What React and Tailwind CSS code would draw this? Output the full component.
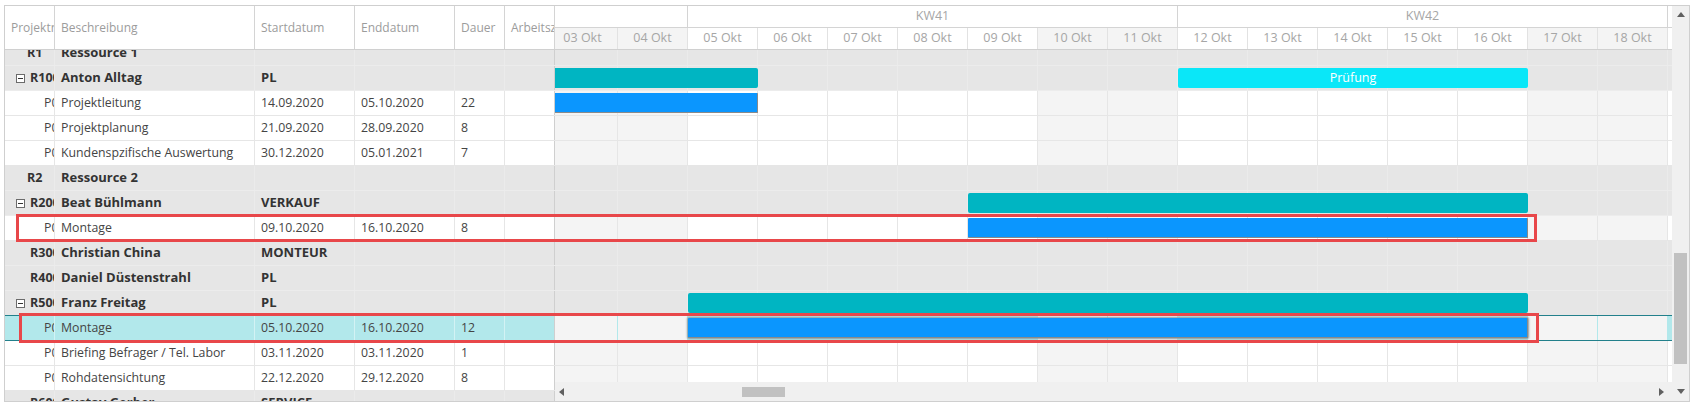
import React from "react";

const days = [
  { label: "03 Okt", we: true },
  { label: "04 Okt", we: true },
  { label: "05 Okt" },
  { label: "06 Okt" },
  { label: "07 Okt" },
  { label: "08 Okt" },
  { label: "09 Okt" },
  { label: "10 Okt", we: true },
  { label: "11 Okt", we: true },
  { label: "12 Okt" },
  { label: "13 Okt" },
  { label: "14 Okt" },
  { label: "15 Okt" },
  { label: "16 Okt" },
  { label: "17 Okt", we: true },
  { label: "18 Okt", we: true },
  { label: "19 Okt" },
];

// bar positions are px from the left edge of 03 Okt
const rows = [
  { kind: "group", code: "R1", name: "Ressource 1" },
  {
    kind: "res", code: "R1001", name: "Anton Alltag", role: "PL", expand: true,
    bars: [
      { type: "sum", left: -600, width: 810 },
      { type: "test", left: 630, width: 350, label: "Prüfung" },
    ],
  },
  { kind: "task", code: "P0001", name: "Projektleitung", start: "14.09.2020", end: "05.10.2020", dur: "22", bars: [{ type: "task", left: -600, width: 810 }] },
  { kind: "task", code: "P0002", name: "Projektplanung", start: "21.09.2020", end: "28.09.2020", dur: "8" },
  { kind: "task", code: "P0003", name: "Kundenspzifische Auswertung", start: "30.12.2020", end: "05.01.2021", dur: "7" },
  { kind: "group", code: "R2", name: "Ressource 2" },
  { kind: "res", code: "R2001", name: "Beat Bühlmann", role: "VERKAUF", expand: true, bars: [{ type: "sum", left: 420, width: 560 }] },
  { kind: "task", code: "P0004", name: "Montage", start: "09.10.2020", end: "16.10.2020", dur: "8", bars: [{ type: "task", left: 420, width: 560 }] },
  { kind: "res", code: "R3001", name: "Christian China", role: "MONTEUR" },
  { kind: "res", code: "R4001", name: "Daniel Düstenstrahl", role: "PL" },
  { kind: "res", code: "R5001", name: "Franz Freitag", role: "PL", expand: true, bars: [{ type: "sum", left: 140, width: 840 }] },
  { kind: "task", code: "P0005", name: "Montage", start: "05.10.2020", end: "16.10.2020", dur: "12", selected: true, bars: [{ type: "task", left: 140, width: 840, active: true }] },
  { kind: "task", code: "P0006", name: "Briefing Befrager / Tel. Labor", start: "03.11.2020", end: "03.11.2020", dur: "1" },
  { kind: "task", code: "P0007", name: "Rohdatensichtung", start: "22.12.2020", end: "29.12.2020", dur: "8" },
  { kind: "res", code: "R6001", name: "Gustav Gerber", role: "SERVICE" },
];

const cols = [
  { key: "code", title: "Projektnr", w: "w-[50px]" },
  { key: "name", title: "Beschreibung", w: "w-[200px]" },
  { key: "start", title: "Startdatum", w: "w-[100px]" },
  { key: "end", title: "Enddatum", w: "w-[100px]" },
  { key: "dur", title: "Dauer", w: "w-[50px]" },
  { key: "work", title: "Arbeitszeit", w: "w-[50px]" },
];

function rowLine(i) {
  if (rows[i + 1] && rows[i + 1].selected) return "border-[#22808b]";
  if (rows[i].selected) return "border-[#22808b]";
  return rows[i].kind === "task" ? "border-[#e6e6e6]" : "border-[#ececec]";
}

function Minus() {
  return (
    <span className="w-[9px] h-[9px] border border-[#6b6b6b] bg-white flex items-center justify-center shrink-0">
      <span className="w-[5px] h-[1px] bg-[#333]" />
    </span>
  );
}

function CodeCell({ row }) {
  if (row.kind === "group")
    return <span className="pl-[22px] font-bold text-[12.5px] text-[#333]">{row.code}</span>;
  if (row.kind === "res")
    return (
      <span className="flex items-center pl-[11px] gap-[5px] font-bold text-[12.5px] text-[#333]">
        {row.expand ? <Minus /> : <span className="w-[9px] shrink-0" />}
        {row.code}
      </span>
    );
  return <span className="pl-[39px] text-[#444]">{row.code}</span>;
}

function GridRow({ row, i }) {
  const grey = row.kind !== "task";
  const bg = row.selected ? "bg-[#b2e8eb]" : grey ? "bg-[#e6e6e6]" : "bg-white";
  const divider = row.selected ? "border-[#d3f2f4]" : grey ? "border-[#ebebeb]" : "border-[#e6e6e6]";
  const weight = grey ? "font-bold text-[13px] text-[#333]" : "text-[#444]";
  return (
    <div className={`flex h-[25px] shrink-0 border-b ${rowLine(i)} ${bg} ${row.selected ? "border-l border-l-[#22808b] ml-[-1px]" : ""}`}>
      {cols.map((c) => (
        <div
          key={c.key}
          className={`${c.w} shrink-0 h-full border-r ${c.key === "work" ? "border-[#cfcfcf]" : divider} flex items-center overflow-hidden whitespace-nowrap ${c.key === "code" ? "" : "px-[6px]"}`}
        >
          {c.key === "code" && <CodeCell row={row} />}
          {c.key === "name" && <span className={weight}>{row.name}</span>}
          {c.key === "start" && <span className={weight}>{row.kind === "res" ? row.role : row.start}</span>}
          {c.key === "end" && <span className={weight}>{row.end}</span>}
          {c.key === "dur" && <span className={weight}>{row.dur}</span>}
        </div>
      ))}
    </div>
  );
}

function Bar({ bar }) {
  const pos = { left: bar.left, width: bar.width };
  if (bar.type === "sum")
    return <div className="absolute top-[2px] h-[20px] bg-[#00b5c2] rounded-[2px]" style={pos} />;
  if (bar.type === "test")
    return (
      <div
        className="absolute top-[2px] h-[20px] bg-[#0ae7f8] rounded-[2px] flex items-center justify-center text-white text-[12.5px]"
        style={pos}
      >
        {bar.label}
      </div>
    );
  return (
    <div
      className={`absolute top-[2px] h-[20px] bg-[#0b96fe] rounded-[1px] border-b border-r border-[#8a8a8a] ${bar.active ? "shadow-[0_0_2px_1px_#8f9a9c]" : ""}`}
      style={pos}
    />
  );
}

function GanttRow({ row, i }) {
  const grey = row.kind !== "task";
  return (
    <div className={`relative flex h-[25px] shrink-0 border-b ${rowLine(i)}`}>
      {days.map((d) => {
        let cell = "bg-white border-[#e6e6e6]";
        if (grey) cell = "bg-[#e6e6e6] border-[#ebebeb]";
        else if (row.selected) cell = d.we ? "bg-[#f4f4f4] border-[#b2e8eb]" : "bg-[#b2e8eb] border-[#b2e8eb]";
        else if (d.we) cell = "bg-[#f4f4f4] border-[#e6e6e6]";
        return <div key={d.label} className={`w-[70px] shrink-0 h-full border-r ${cell}`} />;
      })}
      {(row.bars || []).map((b, k) => (
        <Bar key={k} bar={b} />
      ))}
    </div>
  );
}

function Arrow({ dir }) {
  const pts = {
    up: "0,5 4,0 8,5",
    down: "0,0 8,0 4,5",
    left: "5,0 5,8 0,4",
    right: "0,0 0,8 5,4",
  }[dir];
  const vertical = dir === "up" || dir === "down";
  return (
    <svg width={vertical ? 8 : 5} height={vertical ? 5 : 8} className="block">
      <polygon points={pts} fill="#606060" />
    </svg>
  );
}

export default function App() {
  return (
    <div className="w-[1698px] h-[407px] bg-white pt-[5px] pl-[4px] font-['Open_Sans',sans-serif] text-[12.3px]">
      <div className="relative w-[1686px] h-[397px] border border-[#cfcfcf] flex overflow-hidden">
        {/* resource / task grid */}
        <div className="w-[550px] shrink-0 flex flex-col">
          <div className="flex h-[44px] shrink-0 border-b border-[#d0d0d0] bg-white text-[12px]">
            {cols.map((c) => (
              <div
                key={c.key}
                className={`${c.w} shrink-0 h-full border-r border-[#d4d4d4] flex items-center pl-[6px] overflow-hidden whitespace-nowrap text-[#9c9c9c]`}
              >
                {c.title}
              </div>
            ))}
          </div>
          <div className="flex-1 overflow-hidden">
            <div className="mt-[-9px] flex flex-col">
              {rows.map((r, i) => (
                <GridRow key={i} row={r} i={i} />
              ))}
            </div>
          </div>
        </div>

        {/* gantt chart */}
        <div className="w-[1117px] shrink-0 flex flex-col">
          <div className="h-[44px] shrink-0 overflow-hidden border-b border-[#d0d0d0] text-[#a6a6a6] text-[12.5px]">
            <div className="flex h-[22px] ml-[-7px] border-b border-[#d4d4d4] bg-white">
              <div className="w-[140px] shrink-0 border-r border-[#d4d4d4]" />
              <div className="w-[490px] shrink-0 border-r border-[#d4d4d4] flex items-center justify-center">KW41</div>
              <div className="w-[490px] shrink-0 border-r border-[#d4d4d4] flex items-center justify-center">KW42</div>
              <div className="w-[70px] shrink-0" />
            </div>
            <div className="flex h-[21px] ml-[-7px]">
              {days.map((d) => (
                <div
                  key={d.label}
                  className={`w-[70px] shrink-0 h-full border-r border-[#e2e2e2] flex items-center justify-center ${d.we ? "bg-[#f4f4f4]" : "bg-white"}`}
                >
                  {d.label}
                </div>
              ))}
            </div>
          </div>
          <div className="flex-1 overflow-hidden">
            <div className="mt-[-9px] ml-[-7px] flex flex-col">
              {rows.map((r, i) => (
                <GanttRow key={i} row={r} i={i} />
              ))}
            </div>
          </div>
          <div className="h-[19px] shrink-0 bg-[#f0f0f0] flex items-center">
            <div className="w-[13px] flex justify-center"><Arrow dir="left" /></div>
            <div className="ml-[174px] w-[43px] h-[10px] bg-[#c1c1c1]" />
            <div className="flex-1" />
            <div className="w-[14px] flex justify-center mr-[4px]"><Arrow dir="right" /></div>
          </div>
        </div>

        {/* vertical scrollbar */}
        <div className="w-[17px] shrink-0 bg-[#f0f0f0] flex flex-col items-center">
          <div className="h-[17px] flex items-center justify-center"><Arrow dir="up" /></div>
          <div className="mt-[230px] w-[13px] h-[111px] bg-[#c1c1c1]" />
          <div className="flex-1" />
          <div className="h-[19px] flex items-center justify-center"><Arrow dir="down" /></div>
        </div>

        {/* highlight frames */}
        <div className="absolute left-[11px] top-[208px] w-[1521px] h-[28px] border-[3px] border-[#e8474a] pointer-events-none" />
        <div className="absolute left-[14px] top-[307px] w-[1520px] h-[30px] border-[3px] border-[#e8474a] pointer-events-none" />
      </div>
    </div>
  );
}
